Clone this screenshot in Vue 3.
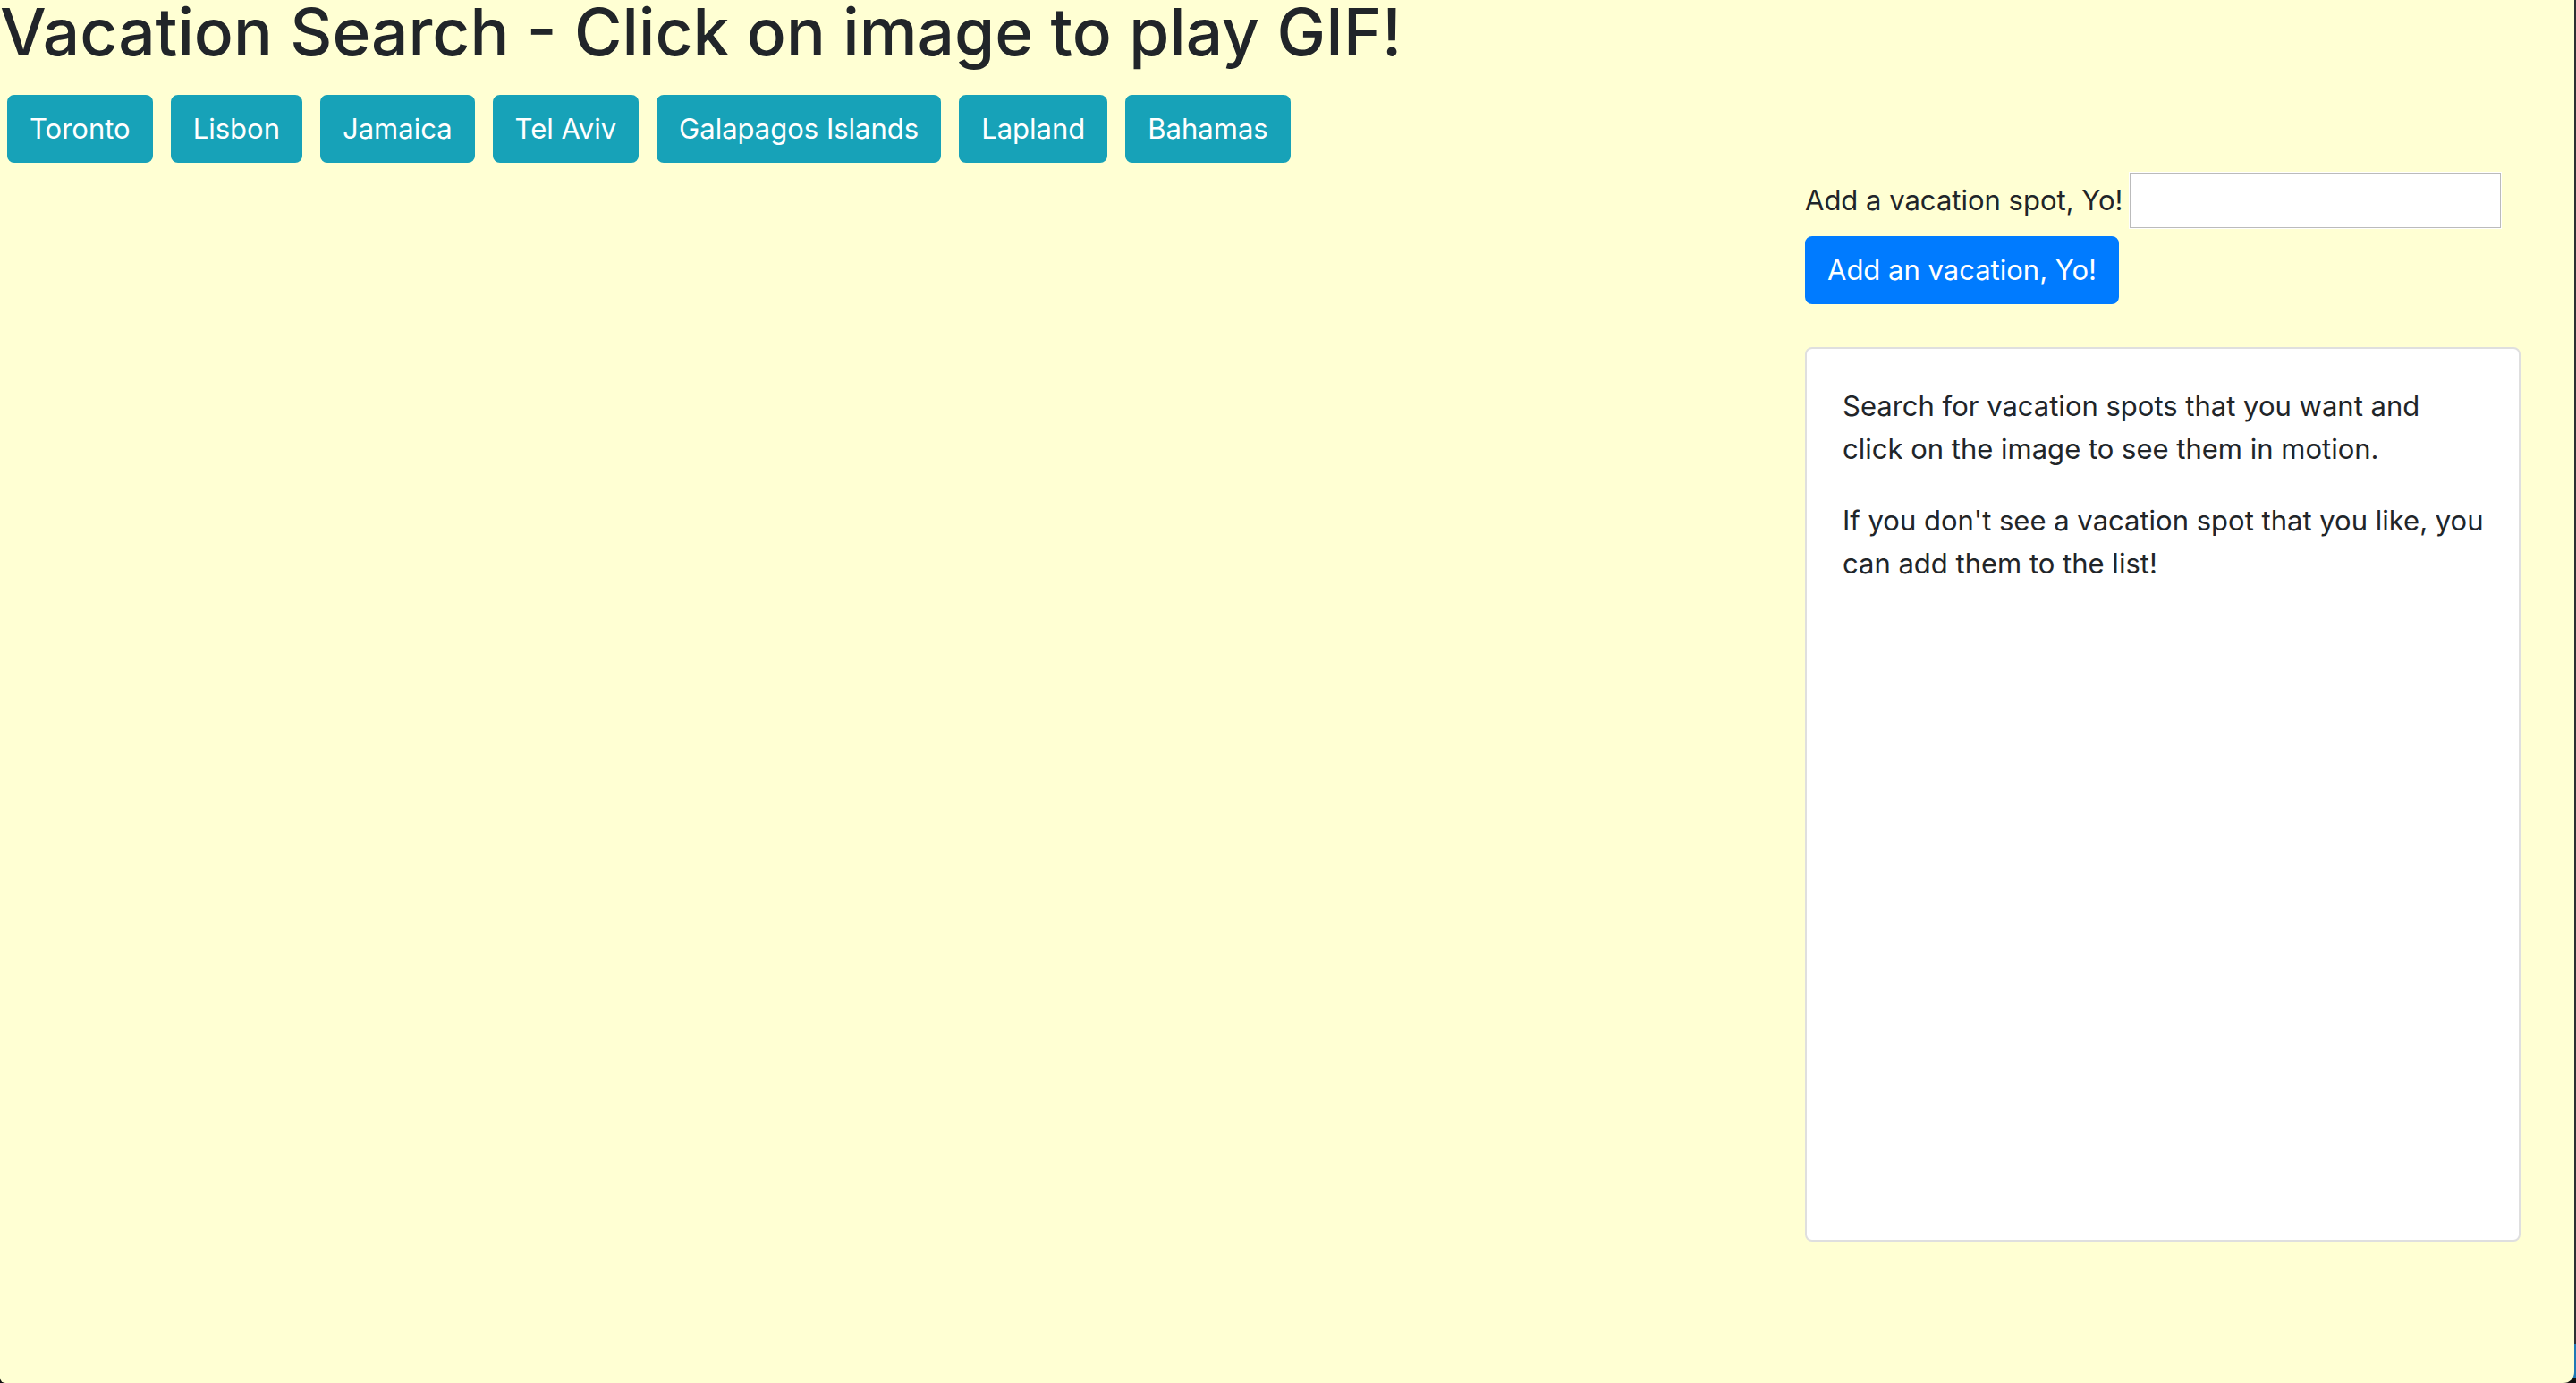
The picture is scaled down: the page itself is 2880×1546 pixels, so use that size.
<script setup>
import { ref } from 'vue'

const spots = ref(['Toronto', 'Lisbon', 'Jamaica', 'Tel Aviv', 'Galapagos Islands', 'Lapland', 'Bahamas'])
const newSpot = ref('')

function addSpot() {
  const name = newSpot.value.trim()
  if (!name) return
  spots.value.push(name)
  newSpot.value = ''
}
</script>

<template>
  <div class="page">
    <h1>Vacation Search - Click on image to play GIF!</h1>
    <div class="spots">
      <button v-for="spot in spots" :key="spot" type="button" class="btn info">{{ spot }}</button>
    </div>
    <aside class="side">
      <form @submit.prevent="addSpot">
        <div class="field">
          <label for="vacation-input">Add a vacation spot, Yo!</label>
          <input id="vacation-input" v-model="newSpot" type="text">
        </div>
        <button type="submit" class="btn primary">Add an vacation, Yo!</button>
      </form>
      <div class="card">
        <p>Search for vacation spots that you want and click on the image to see them in motion.</p>
        <p>If you don't see a vacation spot that you like, you can add them to the list!</p>
      </div>
    </aside>
  </div>
</template>

<style>
body {
  background: linear-gradient(to top, #111 6px, #1f78b4 6px, #1f78b4 44px, #2e2f33 44px);
}
</style>

<style scoped>
.page {
  box-sizing: border-box;
  min-height: 100vh;
  margin-right: 2px;
  background: #ffffd3;
  border-radius: 0 0 12px 6px;
  color: #212529;
  font-family: Inter, "Liberation Sans", sans-serif;
  font-size: 31px;
  line-height: 48px;
}

h1 {
  margin: 0 0 34px;
  font-size: 73px;
  font-weight: 500;
  line-height: 72px;
}

.spots {
  display: flex;
  flex-wrap: wrap;
  gap: 20px;
  padding-left: 8px;
}

.btn {
  padding: 12px 23px;
  border: 2px solid;
  border-radius: 8px;
  color: #fff;
  font: inherit;
  cursor: pointer;
}

.info {
  background: #17a2b8;
  border-color: #17a2b8;
}

.primary {
  background: #007bff;
  border-color: #007bff;
}

.side {
  width: 800px;
  margin: 11px 60px 0 auto;
}

.field {
  display: flex;
  align-items: center;
  gap: 8px;
  padding-right: 22px;
  margin-bottom: 9px;
}

label {
  white-space: nowrap;
}

input {
  box-sizing: border-box;
  flex: 1;
  min-width: 0;
  height: 62px;
  padding: 4px;
  border: 1px solid #bbb;
  box-shadow: 0 0 0 1px #fff;
  background: #fff;
  font: inherit;
}

.card {
  box-sizing: border-box;
  min-height: 1000px;
  margin-top: 48px;
  padding: 40px 38px 40px 40px;
  border: 2px solid #dfdfdf;
  border-radius: 8px;
  background: #fff;
}

p {
  margin: 0 0 32px;
}
</style>
